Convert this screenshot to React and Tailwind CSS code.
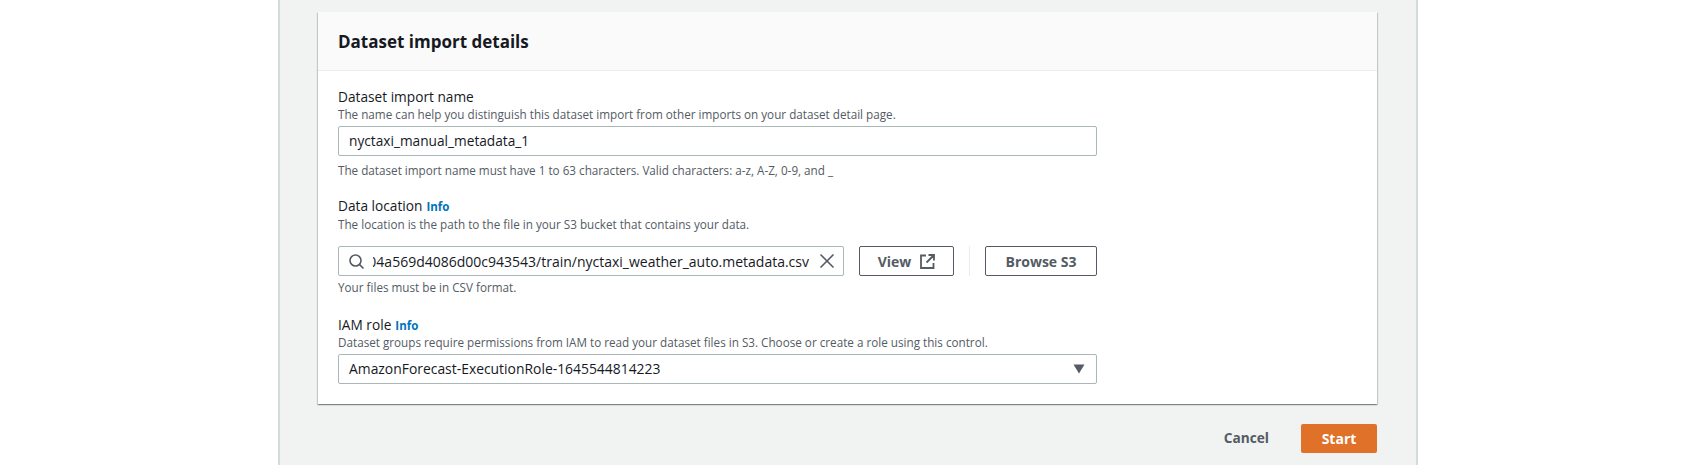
import React from 'react';

function Label({ children, info }) {
  return (
    <div className="text-[13.7px] leading-[19px] text-[#16191f]">
      {children}
      {info && <span className="ml-[4px] text-[11.5px] font-bold text-[#0073bb]">Info</span>}
    </div>
  );
}

function Hint({ children }) {
  return <div className="text-[11.7px] leading-[16px] text-[#545b64]">{children}</div>;
}

function App() {
  return (
    <div className="min-h-screen bg-white flex justify-center font-['Open_Sans','Liberation_Sans',sans-serif] overflow-hidden h-[465px]">
      <div className="ml-[-10px] w-[1140px] bg-[#f1f3f3] border-x-2 border-[#d5dbdb] pt-3 pl-[38px] pr-[39px]">
        <div className="bg-white shadow-[0_1px_1px_0_rgba(0,28,36,0.3),1px_1px_1px_0_rgba(0,28,36,0.15),-1px_1px_1px_0_rgba(0,28,36,0.15)]">
          <div className="h-[59px] bg-[#fafafa] border-b border-[#eaeded] px-5 pt-[2px] flex items-center">
            <h2 className="text-[17px] font-bold text-[#16191f]">Dataset import details</h2>
          </div>
          <div className="px-5 pt-4 pb-5">
            <Label>Dataset import name</Label>
            <Hint>The name can help you distinguish this dataset import from other imports on your dataset detail page.</Hint>
            <div className="mt-1 h-[30px] w-[759px] border border-[#aab7b8] rounded-[2px] px-[10px] flex items-center text-[13.7px] text-[#16191f]">
              nyctaxi_manual_metadata_1
            </div>
            <div className="mt-[6px]"><Hint>The dataset import name must have 1 to 63 characters. Valid characters: a-z, A-Z, 0-9, and _</Hint></div>

            <div className="mt-[18px]"><Label info>Data location</Label></div>
            <Hint>The location is the path to the file in your S3 bucket that contains your data.</Hint>
            <div className="mt-[14px] flex items-center">
              <div className="h-[30px] w-[506px] border border-[#aab7b8] rounded-[2px] flex items-center text-[14px] text-[#16191f]">
                <svg className="ml-[9px] shrink-0" width="17" height="17" viewBox="0 0 17 17" fill="none" stroke="#545b64" strokeWidth="1.6">
                  <circle cx="7.5" cy="7.5" r="5.5" />
                  <path d="M11.4 11.4 15.5 15.5" />
                </svg>
                <div className="ml-[8px] flex-1 overflow-hidden flex justify-end whitespace-nowrap">
                  <span>004a569d4086d00c943543/train/nyctaxi_weather_auto.metadata.csv</span>
                </div>
                <svg className="ml-[10px] mr-[8px] shrink-0" width="16" height="16" viewBox="0 0 16 16" fill="none" stroke="#545b64" strokeWidth="1.6">
                  <path d="M1.5 1.5 14.5 14.5M14.5 1.5 1.5 14.5" />
                </svg>
              </div>
              <button className="ml-[15px] h-[30px] w-[95px] border border-[#545b64] rounded-[2px] flex items-center justify-center gap-[9px] text-[14px] font-bold text-[#545b64]">
                View
                <svg width="15" height="15" viewBox="0 0 15 15" fill="none" stroke="#545b64" strokeWidth="1.8">
                  <path d="M6 1.5H1V14H13.5V9M8.5 1H14V6.5M14 1 6.5 8.5" />
                </svg>
              </button>
              <div className="ml-[15px] h-[30px] w-px bg-[#eaeded]" />
              <button className="ml-[15px] h-[30px] w-[112px] border border-[#545b64] rounded-[2px] text-[14px] font-bold text-[#545b64]">
                Browse S3
              </button>
            </div>
            <div className="mt-[3px]"><Hint>Your files must be in CSV format.</Hint></div>

            <div className="mt-5"><Label info>IAM role</Label></div>
            <div className="-mt-px"><Hint>Dataset groups require permissions from IAM to read your dataset files in S3. Choose or create a role using this control.</Hint></div>
            <div className="mt-1 h-[30px] w-[759px] border border-[#aab7b8] rounded-[2px] pl-[10px] pr-[11px] flex items-center justify-between text-[13.9px] text-[#16191f]">
              AmazonForecast-ExecutionRole-1645544814223
              <svg width="12" height="10" viewBox="0 0 12 10" fill="#545b64"><path d="M0.5 0.5H11.5L6 9.5Z" /></svg>
            </div>
          </div>
        </div>
        <div className="mt-5 flex justify-end items-center">
          <button className="text-[13.7px] font-bold text-[#545b64] mr-8">Cancel</button>
          <button className="h-[29px] w-[76px] bg-[#e07128] rounded-[2px] text-[14px] font-bold text-white">Start</button>
        </div>
      </div>
    </div>
  );
}

export default App;
